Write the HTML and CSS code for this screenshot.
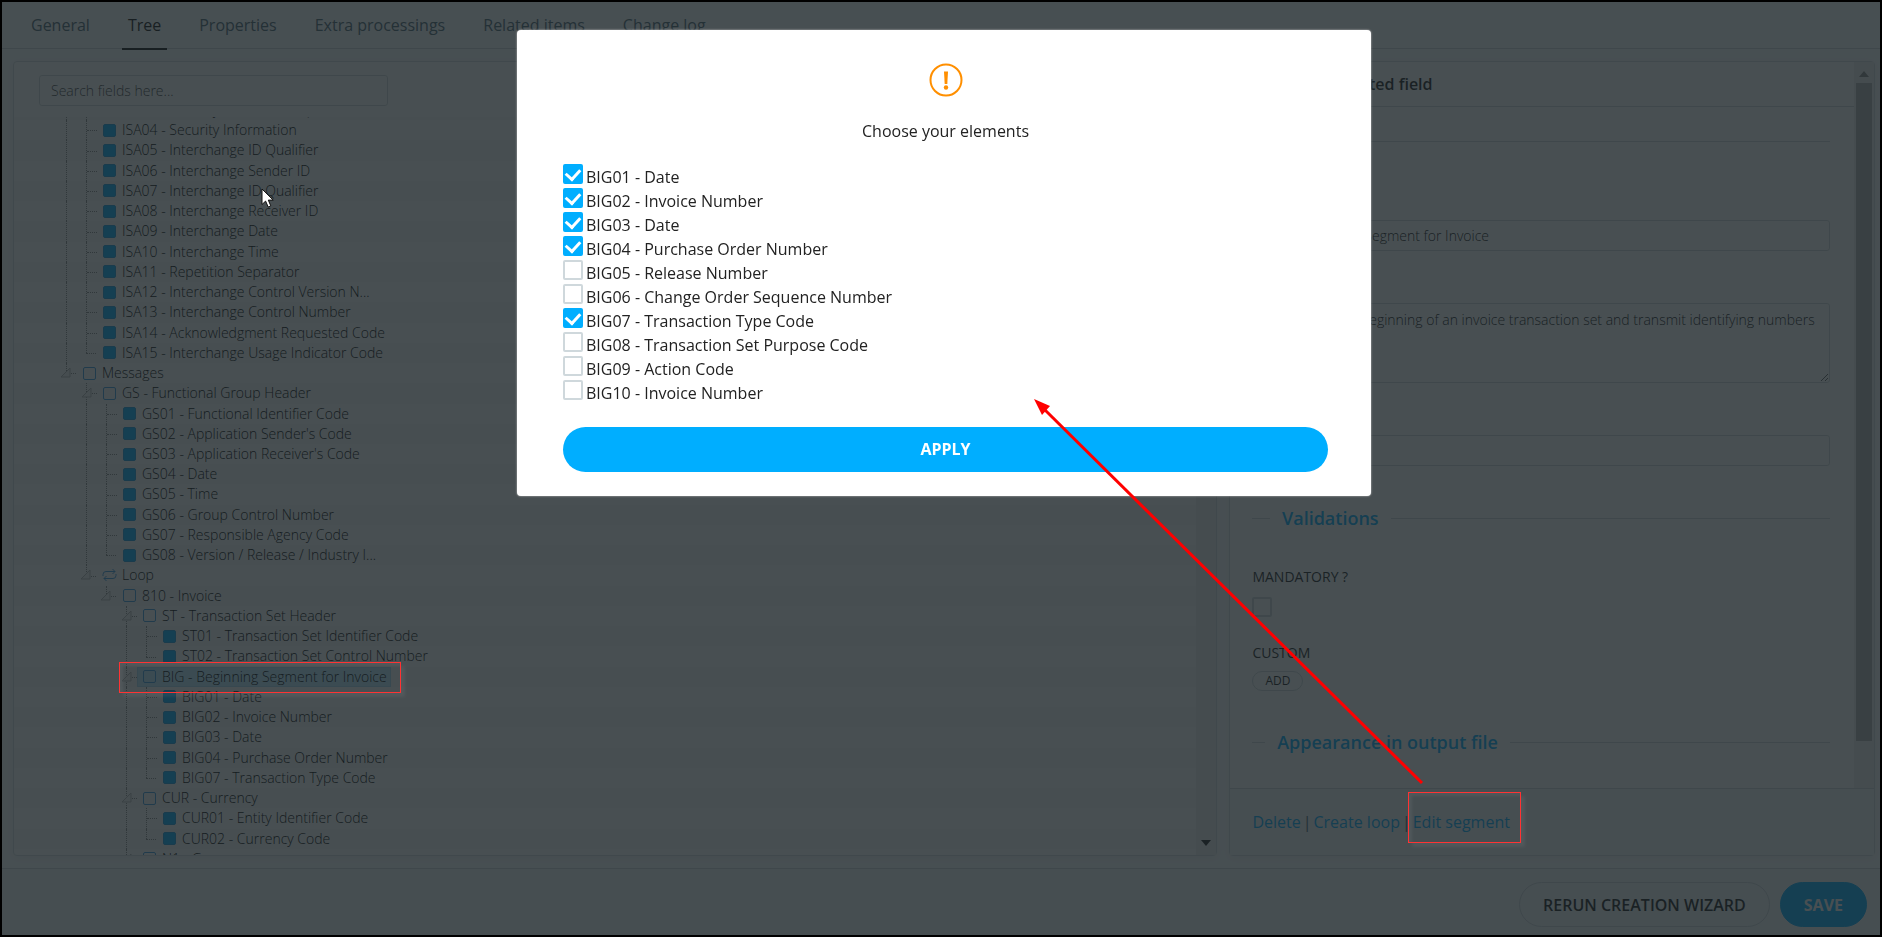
FILE: index.html
```html
<!DOCTYPE html>
<html lang="en">

<head>
    <meta charset="UTF-8">
    <meta name="viewport" content="width=device-width, initial-scale=1.0">
    <title>Tree</title>
    <link rel="stylesheet" href="styles.css">
</head>

<body>
    <div id="wrap">
        <nav class="tabs">
            <a href="#">General</a>
            <a href="#" class="active">Tree</a>
            <a href="#">Properties</a>
            <a href="#">Extra processings</a>
            <a href="#">Related items</a>
            <a href="#">Change log</a>
        </nav>

        <div id="content">
            <section class="panel tree-panel">
                <div class="search">
                    <input type="text" name="search" placeholder="Search fields here..." aria-label="Search fields">
                </div>
                <div class="tree-view">
                    <ul id="tree"></ul>
                    <div class="scrollbar">
                        <span class="arrow-down"></span>
                    </div>
                </div>
            </section>

            <section class="panel field-panel">
                <div class="field-view">
                    <div class="field-main">
                        <h2>Edition of selected field</h2>
                        <form id="frm">
                            <div class="legend">
                                <h3>General</h3>
                            </div>
                            <div class="group">
                                <label for="fieldName">Name</label>
                                <input type="text" id="fieldName" value="BIG - Beginning Segment for Invoice">
                            </div>
                            <div class="group">
                                <label for="fieldDesc">Description</label>
                                <textarea id="fieldDesc">To indicate the beginning of an invoice transaction set and transmit identifying numbers and dates</textarea>
                            </div>
                            <div class="group">
                                <label for="fieldTag">Tag</label>
                                <input type="text" id="fieldTag">
                            </div>
                            <div class="legend">
                                <h3>Validations</h3>
                            </div>
                            <div class="group mandatory">
                                <label for="mandatory">Mandatory ?</label>
                                <input type="checkbox" class="check" id="mandatory">
                            </div>
                            <div class="custom">
                                <span>Custom</span>
                                <button type="button">ADD</button>
                            </div>
                            <div class="legend output">
                                <h3>Appearance in output file</h3>
                            </div>
                        </form>
                    </div>
                    <div class="scrollbar">
                        <span class="arrow-up"></span>
                        <span class="thumb"></span>
                    </div>
                </div>
                <div class="actions">
                    <a href="#">Delete</a>
                    <span>|</span>
                    <a href="#">Create loop</a>
                    <span>|</span>
                    <a href="#" class="marked">Edit segment</a>
                </div>
            </section>
        </div>

        <footer class="bottom">
            <button type="button" class="btn">RERUN CREATION WIZARD</button>
            <button type="button" class="btn save">SAVE</button>
        </footer>
    </div>

    <div class="overlay">
        <div class="modal" role="dialog" aria-labelledby="modalTitle">
            <svg class="warn" viewBox="0 0 34 34" width="34" height="34">
                <circle cx="17" cy="17" r="15.5" />
                <path d="M15 8.500h4l-.7 12.500h-2.600z" />
                <circle class="dot" cx="17" cy="24.500" r="2.200" />
            </svg>
            <p id="modalTitle">Choose your elements</p>
            <form id="elements"></form>
            <button type="submit" form="elements" class="apply">APPLY</button>
        </div>
    </div>

    <!-- arrow from the link to the dialog -->
    <svg class="pointer" width="1882" height="937" viewBox="0 0 1882 937">
        <path class="line" d="M1044 409L1422 783" />
        <path class="head" d="M1034 399L1050 406L1042 415z" />
    </svg>
    <svg class="cursor" width="13" height="20" viewBox="0 0 13 20">
        <path d="M1 1v15.500l3.600-3.400l2.600 5.900l2.600-1.100l-2.500-5.800h4.900z" />
    </svg>

    <script>
        // [level, type, text]
        let nodes = [
            [1, 'field', 'ISA03 - Security Information Qualifier'],
            [1, 'field', 'ISA04 - Security Information'],
            [1, 'field', 'ISA05 - Interchange ID Qualifier'],
            [1, 'field', 'ISA06 - Interchange Sender ID'],
            [1, 'field', 'ISA07 - Interchange ID Qualifier'],
            [1, 'field', 'ISA08 - Interchange Receiver ID'],
            [1, 'field', 'ISA09 - Interchange Date'],
            [1, 'field', 'ISA10 - Interchange Time'],
            [1, 'field', 'ISA11 - Repetition Separator'],
            [1, 'field', 'ISA12 - Interchange Control Version N...'],
            [1, 'field', 'ISA13 - Interchange Control Number'],
            [1, 'field', 'ISA14 - Acknowledgment Requested Code'],
            [1, 'field', 'ISA15 - Interchange Usage Indicator Code'],
            [0, 'segment', 'Messages'],
            [1, 'segment', 'GS - Functional Group Header'],
            [2, 'field', 'GS01 - Functional Identifier Code'],
            [2, 'field', 'GS02 - Application Sender\'s Code'],
            [2, 'field', 'GS03 - Application Receiver\'s Code'],
            [2, 'field', 'GS04 - Date'],
            [2, 'field', 'GS05 - Time'],
            [2, 'field', 'GS06 - Group Control Number'],
            [2, 'field', 'GS07 - Responsible Agency Code'],
            [2, 'field', 'GS08 - Version / Release / Industry I...'],
            [1, 'loop', 'Loop'],
            [2, 'segment', '810 - Invoice'],
            [3, 'segment', 'ST - Transaction Set Header'],
            [4, 'field', 'ST01 - Transaction Set Identifier Code'],
            [4, 'field', 'ST02 - Transaction Set Control Number'],
            [3, 'segment', 'BIG - Beginning Segment for Invoice'],
            [4, 'field', 'BIG01 - Date'],
            [4, 'field', 'BIG02 - Invoice Number'],
            [4, 'field', 'BIG03 - Date'],
            [4, 'field', 'BIG04 - Purchase Order Number'],
            [4, 'field', 'BIG07 - Transaction Type Code'],
            [3, 'segment', 'CUR - Currency'],
            [4, 'field', 'CUR01 - Entity Identifier Code'],
            [4, 'field', 'CUR02 - Currency Code'],
            [3, 'segment', 'N1 - Group']
        ];
        let selected = 'BIG - Beginning Segment for Invoice';

        let elements = [
            ['BIG01 - Date', true],
            ['BIG02 - Invoice Number', true],
            ['BIG03 - Date', true],
            ['BIG04 - Purchase Order Number', true],
            ['BIG05 - Release Number', false],
            ['BIG06 - Change Order Sequence Number', false],
            ['BIG07 - Transaction Type Code', true],
            ['BIG08 - Transaction Set Purpose Code', false],
            ['BIG09 - Action Code', false],
            ['BIG10 - Invoice Number', false]
        ];

        let loopIcon = '<svg class="loop" viewBox="0 0 15 14" width="15" height="14">' +
            '<path d="M1 8V6.500Q1 3.500 4 3.500H13M10.500 1L13 3.500L10.500 6M14 6V7.500Q14 10.500 11 10.500H2M4.500 8L2 10.500L4.500 13"/></svg>';
        let openIcon = '<svg class="open" viewBox="0 0 11 11" width="11" height="11"><path d="M10 1V10H1z"/></svg>';

        // is there another node of this level further down the same branch
        function hasNext(ind, level) {
            for (let i = ind + 1; i < nodes.length; i++) {
                if (nodes[i][0] == level) return true;
                if (nodes[i][0] < level) return false;
            }
            return level == 3;
        }

        nodes.forEach(([level, type, text], ind) => {
            let li = document.createElement('li');
            for (let i = 0; i < level; i++) {
                li.innerHTML += `<i class="guide${hasNext(ind, i) ? ' full' : ''}"></i>`;
            }
            li.innerHTML += `<i class="guide stub ${hasNext(ind, level) ? 'full' : 'half'}">${type == 'field' ? '' : openIcon}</i>`;

            let node = document.createElement('span');
            node.className = 'node';
            node.innerHTML = type == 'loop' ? loopIcon : `<i class="box ${type}"></i>`;
            node.append(text);
            if (text == selected) {
                node.classList.add('selected');
                li.classList.add('marked');
            }
            li.append(node);
            document.getElementById('tree').append(li);
        });

        elements.forEach(([text, checked]) => {
            let label = document.createElement('label');
            label.innerHTML = `<input type="checkbox" class="check"${checked ? ' checked' : ''}><span>${text}</span>`;
            document.getElementById('elements').append(label);
        });
    </script>
</body>

</html>
```
FILE: styles.css
```css
* {
    box-sizing: border-box;
}

body {
    margin: 0;
    background-color: #000;
    font-family: "Open Sans", "Noto Sans", sans-serif;
    font-size: 14px;
    color: #1c1c1c;
}

a {
    color: #00aeff;
    text-decoration: none;
}

button,
input,
textarea {
    font-family: inherit;
    font-size: inherit;
    color: inherit;
}

#wrap {
    display: flex;
    flex-direction: column;
    height: 100vh;
    border: 2px solid #000;
    background-color: #fbfdfe;
}

/* tabs */
.tabs {
    display: flex;
    gap: 26px;
    height: 47px;
    padding: 0 23px;
    border-bottom: 1px solid #cfd8dc;
}

.tabs>a {
    height: 48px;
    padding: 0 6px;
    line-height: 47px;
    font-size: 16px;
    font-weight: 500;
    color: #4d6875;
}

.tabs>a.active {
    color: #101010;
    border-bottom: 2px solid #101010;
}

/* panels */
#content {
    display: flex;
    flex: 1;
    gap: 12px;
    min-height: 0;
    padding: 12px 5px 12px 11px;
}

.panel {
    display: flex;
    flex-direction: column;
    min-width: 0;
    background-color: #fff;
    border: 1px solid #d7dcdf;
    border-radius: 4px;
    box-shadow: 0 2px 10px rgba(0, 0, 0, 0.05);
}

.tree-panel {
    flex: 1205;
}

.field-panel {
    flex: 645;
}

.scrollbar {
    display: flex;
    flex-direction: column;
    flex: none;
    width: 20px;
    padding: 0 2px;
    background-color: #f1f1f1;
}

.arrow-down,
.arrow-up {
    width: 0;
    margin: auto auto 9px;
    border: 5px solid transparent;
    border-top: 6px solid #222;
    border-bottom: 0;
}

.arrow-up {
    margin: 9px auto 6px;
    border-top: 0;
    border-bottom: 6px solid #8a8a8a;
}

.thumb {
    height: 658px;
    background-color: #b5b5b5;
}

.search {
    padding: 13px 25px 11px;
}

.search>input {
    display: block;
    width: 349px;
    height: 31px;
    padding: 0 11px;
    background-color: transparent;
    border: 1px solid #d2d8db;
    border-radius: 3px;
    font-weight: 300;
}

.search>input::placeholder {
    color: #444;
}

.tree-view {
    display: flex;
    flex: 1;
    min-height: 0;
    overflow: hidden;
}

/* scrolled list, first row is half hidden */
#tree {
    display: grid;
    grid-auto-rows: 1fr;
    flex: 1;
    height: 769px;
    margin: -17px 0 0;
    padding: 0;
    list-style: none;
    font-weight: 300;
    color: #000;
}

#tree>li {
    display: flex;
    min-height: 0;
    padding-left: 52px;
    line-height: 20px;
}

#tree>li:nth-child(odd) {
    background-color: #f8f8f8;
}

.guide {
    position: relative;
    width: 20px;
}

.guide.full {
    border-left: 1px dotted #8a8a8a;
}

.guide.stub {
    width: 16px;
}

.guide.half::before {
    content: "";
    position: absolute;
    left: 0;
    top: 0;
    height: 50%;
    border-left: 1px dotted #8a8a8a;
}

.guide.stub::after {
    content: "";
    position: absolute;
    left: 0;
    top: 50%;
    width: 10px;
    border-top: 1px dotted #8a8a8a;
}

.open {
    position: absolute;
    left: -6px;
    top: 4px;
    z-index: 1;
    fill: #f4f4f4;
    stroke: #bbb;
}

.node {
    display: flex;
    align-items: center;
    height: 20px;
}

.node.selected {
    margin-left: -5px;
    padding: 0 4px 0 5px;
    background-color: #beebff;
    box-shadow: inset 0 0 0 1px #a9dcf3;
}

.box {
    width: 13px;
    height: 13px;
    margin: 0 6px 0 1px;
    border: 1px solid #3f9ae0;
    border-radius: 2px;
}

.box.field {
    background-color: #00aeff;
    border-color: #1a9ce0;
}

.loop {
    margin-right: 5px;
    fill: none;
    stroke: #3f9ae0;
}

/* red frames, drawn over the overlay */
.marked {
    position: relative;
}

.marked::after {
    content: "";
    position: absolute;
    z-index: 20;
    border: 1px solid #f33;
    box-shadow: 4px 4px 3px rgba(255, 255, 255, 0.06), inset 3px 3px 3px rgba(255, 255, 255, 0.06);
}

li.marked::after {
    left: 105px;
    top: -5px;
    width: 280px;
    height: 29px;
}

a.marked::after {
    inset: -19px -11px -10px -5px;
}

/* selected field */
.field-view {
    display: flex;
    flex: 1;
    min-height: 0;
    overflow: hidden;
}

.field-main {
    flex: 1;
    min-width: 0;
}

.field-main h2 {
    margin: 0;
    padding: 0 22px;
    border-bottom: 1px solid #cfd8dc;
    line-height: 44px;
    font-size: 16px;
    font-weight: 600;
}

#frm {
    padding: 21px 24px 0 22px;
}

.legend {
    display: flex;
    align-items: center;
    gap: 12px;
    height: 26px;
}

.legend::before,
.legend::after {
    content: "";
    flex: 1;
    border-top: 1px solid #cfd8dc;
}

.legend::after {
    flex: 25;
}

.legend>h3 {
    margin: 0;
    font-size: 18px;
    font-weight: 600;
    color: #00aeff;
}

.group {
    display: flex;
    flex-direction: column;
    margin-bottom: 22px;
}

.legend+.group {
    margin-top: 36px;
}

.group+.legend {
    margin-top: 39px;
}

.group>label,
.custom>span {
    margin-bottom: 10px;
    line-height: 20px;
    font-weight: 500;
    text-transform: uppercase;
    color: #222;
}

.group>input[type="text"],
.group>textarea {
    height: 31px;
    padding: 0 11px;
    background-color: transparent;
    border: 1px solid #d2d8db;
    border-radius: 3px;
    font-weight: 300;
    color: #111;
}

.group>textarea {
    height: 80px;
    padding: 6px 11px;
    line-height: 20px;
}

.group.mandatory {
    margin-bottom: 26px;
}

.custom {
    display: flex;
    flex-direction: column;
    align-items: flex-start;
}

.custom>span {
    margin-bottom: 8px;
}

.custom>button {
    height: 20px;
    padding: 0 12px;
    background-color: transparent;
    border: 1px solid #cfd8dc;
    border-radius: 10px;
    line-height: 18px;
    font-size: 12px;
    font-weight: 500;
}

.output {
    margin-top: 38px;
}

.actions {
    display: flex;
    align-items: center;
    gap: 2px;
    height: 67px;
    padding: 0 22px;
    background-color: #f5f7f8;
    border-top: 1px solid #cfd8dc;
    line-height: 22px;
    font-size: 16px;
    color: #4d6875;
}

.bottom {
    display: flex;
    justify-content: flex-end;
    gap: 10px;
    padding: 13px 13px 8px;
    background-color: #f5f7f8;
    border-top: 1px solid #cfd8dc;
}

.btn {
    height: 45px;
    padding: 0 23px;
    background-color: transparent;
    border: 1px solid #cfd8dc;
    border-radius: 23px;
    font-size: 16px;
    font-weight: 600;
}

.btn.save {
    background-color: #00aeff;
    border-color: #00aeff;
    font-weight: 700;
    color: #fff;
}

/* dialog */
.overlay {
    position: fixed;
    inset: 2px;
    z-index: 10;
    padding: 28px 0 0 6px;
    background-color: rgba(26, 35, 39, 0.8);
}

.modal {
    display: flex;
    flex-direction: column;
    align-items: center;
    width: 854px;
    max-width: 90%;
    margin: 0 auto;
    padding: 33px 43px 24px 46px;
    background-color: #fff;
    border-radius: 4px;
    box-shadow: 0 0 2px #ccc;
    font-size: 16px;
    color: #222;
}

.warn {
    fill: none;
    stroke: #ff8f00;
    stroke-width: 2;
}

.warn path,
.warn .dot {
    fill: #ff8f00;
    stroke: none;
}

.modal>p {
    margin: 23px 0 22px;
    line-height: 22px;
}

#elements {
    align-self: stretch;
    margin-bottom: 23px;
}

#elements>label {
    display: flex;
    gap: 3px;
    width: max-content;
    height: 24px;
}

#elements span {
    padding-top: 2px;
    line-height: 22px;
}

.check {
    appearance: none;
    display: grid;
    place-items: center;
    width: 20px;
    height: 20px;
    margin: 0;
    border: 2px solid #cfd8dc;
    border-radius: 2px;
}

.check:checked {
    background-color: #00aeff;
    border-color: #00aeff;
}

.check:checked::before {
    content: "";
    width: 7px;
    height: 11px;
    margin-top: -3px;
    border: solid #fff;
    border-width: 0 3px 3px 0;
    transform: rotate(42deg);
}

.apply {
    align-self: stretch;
    height: 45px;
    padding: 0 0 2px;
    background-color: #00aeff;
    border: 0;
    border-radius: 23px;
    font-weight: 700;
    color: #fff;
}

.pointer,
.cursor {
    position: absolute;
    left: 0;
    top: 0;
    z-index: 30;
    pointer-events: none;
}

.pointer .line {
    fill: none;
    stroke: #f00;
    stroke-width: 3;
}

.pointer .head {
    fill: #f00;
}

.cursor {
    left: 261px;
    top: 188px;
    fill: #fff;
    stroke: #111;
}
```
